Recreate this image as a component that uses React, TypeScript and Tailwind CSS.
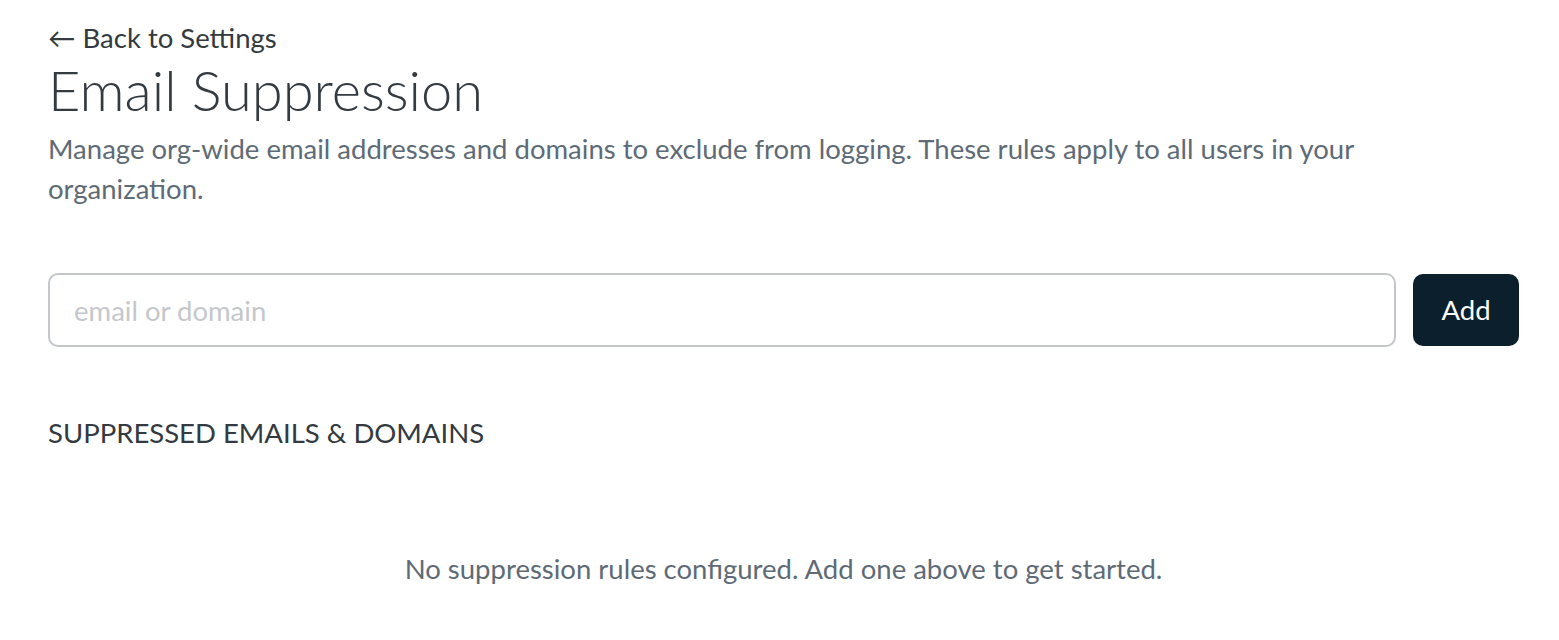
export default function App() {
  return (
    <div className="min-h-screen bg-white pl-[48px] pr-[40px] pt-[20px] font-['Lato','Liberation_Sans',sans-serif]">
      <a href="#" className="block text-[27.5px] leading-[36px] text-[#333a40]">
        ← Back to Settings
      </a>
      <h1 className="mt-[2px] text-[56px] font-light leading-[64px] text-[#333a40]">Email Suppression</h1>
      <p className="mt-[7px] max-w-[1380px] text-[27.5px] leading-[40px] text-[#5e6b76]">
        Manage org-wide email addresses and domains to exclude from logging. These rules apply to all users in your organization.
      </p>
      <div className="mt-[64px] flex items-center gap-[17px]">
        <input
          type="text"
          placeholder="email or domain"
          className="h-[74px] flex-1 rounded-[10px] border-2 border-[#c3c7cb] px-[24px] text-[27.5px] text-[#333a40] outline-none placeholder:text-[#c4c8cc]"
        />
        <button className="h-[72px] w-[106px] rounded-[10px] bg-[#0b1f2d] text-[27.5px] text-white">Add</button>
      </div>
      <h2 className="mt-[68px] text-[27.5px] uppercase leading-[36px] text-[#333a40]">Suppressed Emails &amp; Domains</h2>
      <p className="mt-[100px] text-center text-[27.5px] leading-[36px] text-[#5e6b76]">
        No suppression rules configured. Add one above to get started.
      </p>
    </div>
  );
}
